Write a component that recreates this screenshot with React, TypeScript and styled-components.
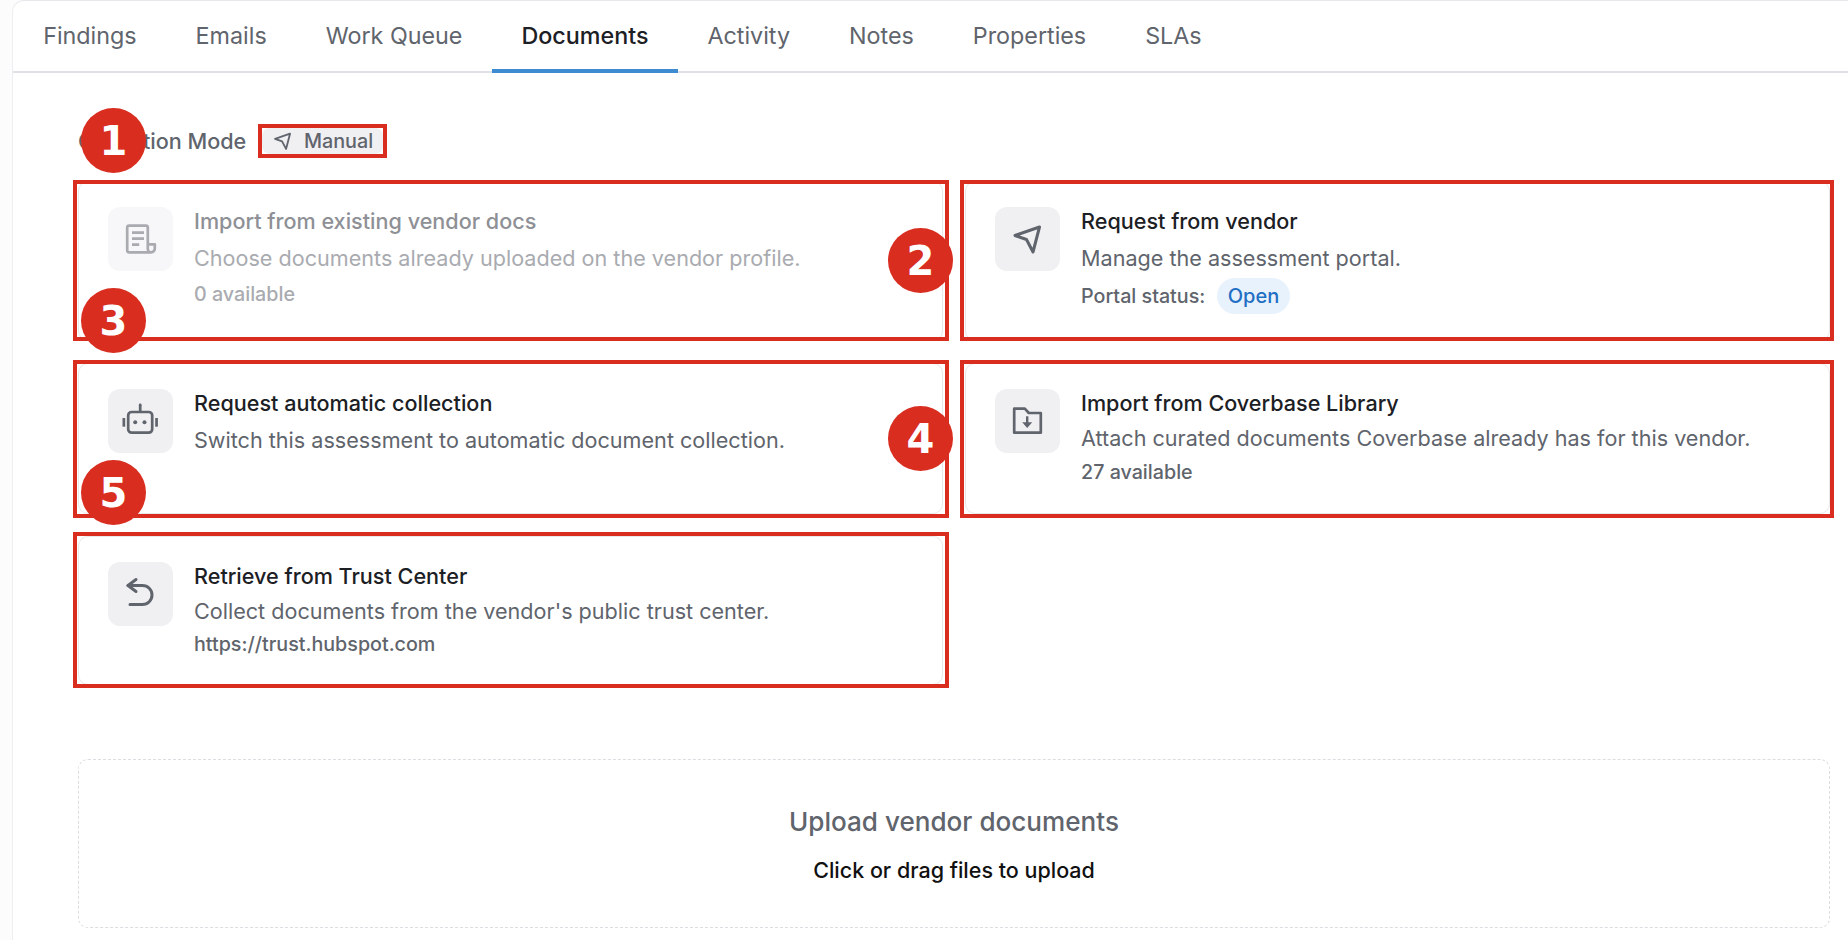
import { ReactNode } from "react";
import styled, { createGlobalStyle } from "styled-components";

const GlobalStyle = createGlobalStyle`
  html, body {
    margin: 0;
    height: 100%;
    overflow: hidden;
    background: #fcfcfd;
  }
  body {
    font-family: Inter, "Liberation Sans", sans-serif;
    color: #1c2024;
  }
`;

const Panel = styled.div`
  position: relative;
  box-sizing: border-box;
  height: 940px;
  margin-left: 12px;
  background: #fff;
  border-left: 1px solid #eeeef1;
  border-top: 1px solid #e8e8ec;
  border-top-left-radius: 12px;
`;

const TabBar = styled.div`
  display: flex;
  height: 72px;
  box-sizing: border-box;
  padding-left: 0.7px;
  border-bottom: 2px solid #e0e1e6;
`;

const Tab = styled.div<{ $active?: boolean }>`
  display: flex;
  align-items: center;
  height: 72px;
  box-sizing: border-box;
  padding: 0 29.5px;
  font-size: 23.3px;
  font-weight: ${(p) => (p.$active ? 500 : 400)};
  color: ${(p) => (p.$active ? "#1c2024" : "#60646c")};
  border-bottom: 4px solid ${(p) => (p.$active ? "#3f8bd2" : "transparent")};
`;

const Content = styled.div`
  padding: 53px 18px 0 65px;
`;

const ModeRow = styled.div`
  display: flex;
  align-items: center;
  gap: 16px;
  height: 30px;
  margin-bottom: 25px;
  font-size: 21.6px;
  font-weight: 460;
  color: #60646c;
`;

const ModePill = styled.div`
  position: relative;
  display: flex;
  align-items: center;
  gap: 9.6px;
  height: 26px;
  padding: 0 10px;
  border-radius: 8px;
  background: #f0f0f3;
  font-size: 19.8px;
  font-weight: 460;
`;

const Grid = styled.div`
  display: grid;
  grid-template-columns: 1fr 1fr;
  grid-template-rows: 160px 151px 149px;
  gap: 22px;
`;

const Card = styled.div<{ $disabled?: boolean }>`
  position: relative;
  display: flex;
  gap: 21px;
  box-sizing: border-box;
  padding: 25px 29px;
  background: #fff;
  border: 1px solid #e8e8ec;
  border-radius: 10px;
  color: ${(p) => (p.$disabled ? "#a9abb0" : "#60646c")};
`;

// red annotation rectangle drawn on top of the screenshot
const Frame = styled.div<{ $t?: number; $r?: number; $b?: number; $l?: number }>`
  position: absolute;
  top: ${(p) => p.$t ?? -4}px;
  right: ${(p) => p.$r ?? -4}px;
  bottom: ${(p) => p.$b ?? -4}px;
  left: ${(p) => p.$l ?? -4}px;
  border: 4px solid #d92d20;
  pointer-events: none;
`;

const IconTile = styled.div<{ $disabled?: boolean }>`
  flex: none;
  display: flex;
  align-items: center;
  justify-content: center;
  width: 65px;
  height: 64px;
  border-radius: 12px;
  background: ${(p) => (p.$disabled ? "#f7f7f9" : "#f0f0f3")};
  color: ${(p) => (p.$disabled ? "#a9abb0" : "#60646c")};
`;

const CardBody = styled.div`
  display: flex;
  flex-direction: column;
  align-items: flex-start;
`;

const CardTitle = styled.div<{ $disabled?: boolean }>`
  height: 31px;
  line-height: 29px;
  font-size: 21.6px;
  font-weight: 500;
  color: ${(p) => (p.$disabled ? "#8e9096" : "#1c2024")};
`;

const CardText = styled.div`
  height: 38px;
  line-height: 40px;
  font-size: 21.6px;
`;

const CardMeta = styled.div<{ $badge?: boolean }>`
  display: flex;
  align-items: center;
  gap: 12px;
  height: 35px;
  margin-top: ${(p) => (p.$badge ? 2.5 : 0)}px;
  font-size: 19.7px;
  font-weight: 460;
`;

const Pill = styled.span`
  display: inline-flex;
  align-items: center;
  height: 36px;
  padding: 0 10.5px;
  border-radius: 18px;
  background: #e8f2fd;
  color: #1f6fc4;
  font-size: 20px;
  font-weight: 460;
`;

const Upload = styled.div`
  display: flex;
  flex-direction: column;
  align-items: center;
  box-sizing: border-box;
  height: 169px;
  margin-top: 74px;
  padding-top: 46px;
  border: 1px dashed #dcdde1;
  border-radius: 10px;
`;

const UploadTitle = styled.div`
  font-size: 26.1px;
  line-height: 32px;
  font-weight: 460;
  color: #60646c;
`;

const UploadHint = styled.div`
  margin-top: 15.5px;
  font-size: 21.5px;
  line-height: 32px;
  font-weight: 500;
  color: #111;
`;

const Marker = styled.div<{ $x: number; $y: number }>`
  position: absolute;
  left: ${(p) => p.$x}px;
  top: ${(p) => p.$y}px;
  display: flex;
  align-items: center;
  justify-content: center;
  width: 65px;
  height: 65px;
  border-radius: 50%;
  background: #d92d20;
  color: #fff;
  font-family: "DejaVu Sans", sans-serif;
  font-size: 40px;
  font-weight: 700;
`;

const Sheet = styled.div`
  position: relative;
`;

const NavIcon = ({ size = 36 }: { size?: number }) => (
  <svg width={size} height={size} viewBox="0 0 36 36" fill="none" stroke="currentColor" strokeWidth="3" strokeLinejoin="round">
    <path d="M29.5 6 5 14.5l11.5 4L23 31z" />
  </svg>
);

const DocIcon = () => (
  <svg width="36" height="36" viewBox="0 0 36 36" fill="none" stroke="currentColor" strokeWidth="2.7" strokeLinejoin="round">
    <path d="M28 31.3H6.2a2 2 0 0 1-2-2V6.7a2 2 0 0 1 2-2h16.6a2 2 0 0 1 2 2V28a3.3 3.3 0 0 0 3.3 3.3a3.7 3.7 0 0 0 3.7-3.7v-4.3h-7" />
    <path d="M9 11.7h12M9 17.7h12M9 23.7h7.2" />
  </svg>
);

const RobotIcon = () => (
  <svg width="40" height="40" viewBox="-2 -2 40 40" fill="none" stroke="currentColor" strokeWidth="2.7">
    <rect x="5.2" y="9" width="24" height="20.7" rx="3.5" />
    <path d="M17.2 9V2" />
    <circle cx="17.2" cy="2" r="1.4" fill="currentColor" stroke="none" />
    <rect x="-0.5" y="15" width="2.7" height="8.7" fill="currentColor" stroke="none" />
    <rect x="32.2" y="15" width="2.7" height="8.7" fill="currentColor" stroke="none" />
    <circle cx="12.2" cy="19.3" r="2" fill="currentColor" stroke="none" />
    <circle cx="21.5" cy="19.3" r="2" fill="currentColor" stroke="none" />
  </svg>
);

const FolderIcon = () => (
  <svg width="36" height="36" viewBox="0 0 36 36" fill="none" stroke="currentColor" strokeWidth="2.7" strokeLinejoin="round">
    <path d="M4.2 5.7h10.6l4 4.3h12v19.7H4.2z" />
    <path d="M17.2 13.3v7" strokeWidth="2.4" />
    <path d="M12.2 19.3h10L17.2 25z" fill="currentColor" stroke="none" />
  </svg>
);

const BackIcon = () => (
  <svg width="36" height="36" viewBox="0 0 36 36" fill="none" stroke="currentColor" strokeWidth="3" strokeLinecap="round" strokeLinejoin="round">
    <path d="M13 3.5 5 9.5l8 6" />
    <path d="M5 9.5h14.5a9.5 9.5 0 0 1 0 19H7" />
  </svg>
);

const tabs = ["Findings", "Emails", "Work Queue", "Documents", "Activity", "Notes", "Properties", "SLAs"];

interface OptionProps {
  icon: ReactNode;
  title: string;
  text: string;
  meta?: ReactNode;
  badge?: boolean;
  disabled?: boolean;
  frame: { $t?: number; $r?: number; $b?: number; $l?: number };
}

const Option = ({ icon, title, text, meta, badge, disabled, frame }: OptionProps) => (
  <Card $disabled={disabled}>
    <IconTile $disabled={disabled}>{icon}</IconTile>
    <CardBody>
      <CardTitle $disabled={disabled}>{title}</CardTitle>
      <CardText>{text}</CardText>
      {meta && <CardMeta $badge={badge}>{meta}</CardMeta>}
    </CardBody>
    <Frame {...frame} />
  </Card>
);

export default function App() {
  return (
    <Sheet>
      <GlobalStyle />
      <Panel>
        <TabBar>
          {tabs.map((t) => (
            <Tab key={t} $active={t === "Documents"}>
              {t}
            </Tab>
          ))}
        </TabBar>
        <Content>
          <ModeRow>
            Collection Mode
            <ModePill>
              <NavIcon size={22} />
              Manual
              <Frame />
            </ModePill>
          </ModeRow>
          <Grid>
            <Option
              disabled
              icon={<DocIcon />}
              title="Import from existing vendor docs"
              text="Choose documents already uploaded on the vendor profile."
              meta="0 available"
              frame={{ $t: -2, $b: -1, $l: -6, $r: -7 }}
            />
            <Option
              badge
              icon={<NavIcon />}
              title="Request from vendor"
              text="Manage the assessment portal."
              meta={
                <>
                  Portal status:
                  <Pill>Open</Pill>
                </>
              }
              frame={{ $t: -2, $b: -1, $l: -6, $r: -5 }}
            />
            <Option
              icon={<RobotIcon />}
              title="Request automatic collection"
              text="Switch this assessment to automatic document collection."
              frame={{ $t: -4, $b: -5, $l: -6, $r: -7 }}
            />
            <Option
              icon={<FolderIcon />}
              title="Import from Coverbase Library"
              text="Attach curated documents Coverbase already has for this vendor."
              meta="27 available"
              frame={{ $t: -4, $b: -5, $l: -6, $r: -5 }}
            />
            <Option
              icon={<BackIcon />}
              title="Retrieve from Trust Center"
              text="Collect documents from the vendor's public trust center."
              meta="https://trust.hubspot.com"
              frame={{ $t: -5, $b: -4, $l: -6, $r: -7 }}
            />
          </Grid>
          <Upload>
            <UploadTitle>Upload vendor documents</UploadTitle>
            <UploadHint>Click or drag files to upload</UploadHint>
          </Upload>
        </Content>
      </Panel>
      <Marker $x={81} $y={108}>1</Marker>
      <Marker $x={888} $y={228}>2</Marker>
      <Marker $x={81} $y={288}>3</Marker>
      <Marker $x={888} $y={406}>4</Marker>
      <Marker $x={81} $y={460}>5</Marker>
    </Sheet>
  );
}
